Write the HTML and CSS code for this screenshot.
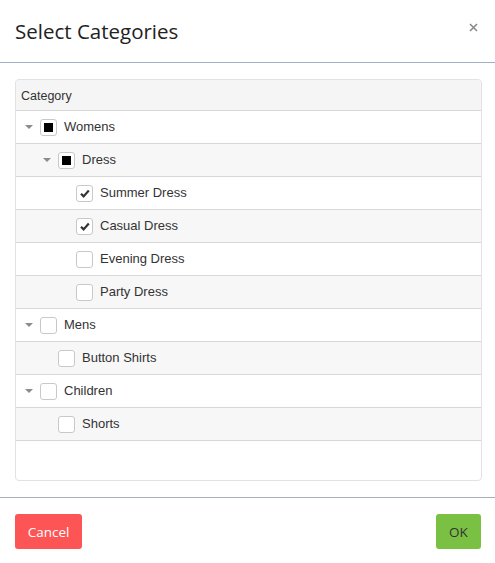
FILE: index.html
```html
<!DOCTYPE html>
<html>
<head>
<meta charset="utf-8">
<link rel="stylesheet" href="styles.css">
</head>
<body>
<div class="modal">
  <div class="modal-header">
    <h4 class="modal-title">Select Categories</h4>
    <button class="close" aria-label="Close">
      <svg width="9" height="9" viewBox="0 0 9 9"><path d="M1 1L8 8M8 1L1 8" stroke="#8a8a8a" stroke-width="1.6" fill="none"/></svg>
    </button>
  </div>
  <div class="modal-body">
    <div class="grid">
      <div class="grid-head">Category</div>
      <div class="row"><span class="toggle"><i class="tri"></i></span><span class="cb"><i class="ind"></i></span><span class="label">Womens</span></div>
      <div class="row alt"><span class="sp"></span><span class="toggle"><i class="tri"></i></span><span class="cb"><i class="ind"></i></span><span class="label">Dress</span></div>
      <div class="row"><span class="sp2"></span><span class="toggle"></span><span class="cb"><svg width="10" height="9" viewBox="0 0 10 9"><path d="M1 4.8L3.6 7.4L8.8 1.6" stroke="#333" stroke-width="2.2" fill="none"/></svg></span><span class="label">Summer Dress</span></div>
      <div class="row alt"><span class="sp2"></span><span class="toggle"></span><span class="cb"><svg width="10" height="9" viewBox="0 0 10 9"><path d="M1 4.8L3.6 7.4L8.8 1.6" stroke="#333" stroke-width="2.2" fill="none"/></svg></span><span class="label">Casual Dress</span></div>
      <div class="row"><span class="sp2"></span><span class="toggle"></span><span class="cb"></span><span class="label">Evening Dress</span></div>
      <div class="row alt"><span class="sp2"></span><span class="toggle"></span><span class="cb"></span><span class="label">Party Dress</span></div>
      <div class="row"><span class="toggle"><i class="tri"></i></span><span class="cb"></span><span class="label">Mens</span></div>
      <div class="row alt"><span class="sp"></span><span class="toggle"></span><span class="cb"></span><span class="label">Button Shirts</span></div>
      <div class="row"><span class="toggle"><i class="tri"></i></span><span class="cb"></span><span class="label">Children</span></div>
      <div class="row alt"><span class="sp"></span><span class="toggle"></span><span class="cb"></span><span class="label">Shorts</span></div>
    </div>
  </div>
  <div class="modal-footer">
    <button class="btn btn-cancel">Cancel</button>
    <button class="btn btn-ok">OK</button>
  </div>
</div>
</body>
</html>
```

FILE: styles.css
```css
* { box-sizing: border-box; }
html, body { margin: 0; padding: 0; background: #fff; }
body { font-family: "Open Sans", "Noto Sans", sans-serif; color: #222; }

.modal { width: 495px; }

.modal-header {
  height: 63px;
  border-bottom: 1px solid #9fb2c4;
  display: flex;
  align-items: center;
  justify-content: space-between;
  padding: 0 15px 0 15px;
}
.modal-title {
  margin: 0;
  font-size: 20.5px;
  font-weight: 400;
  color: #222;
  letter-spacing: 0;
}
.close {
  border: 0;
  background: none;
  padding: 0;
  width: 12px;
  height: 12px;
  display: flex;
  align-items: center;
  justify-content: center;
  margin-right: 1px;
  margin-top: -8px;
}

.modal-body { padding: 16px 13px 16px 15px; }

.grid {
  height: 402px;
  border: 1px solid #e2e2e2;
  border-radius: 4px;
  overflow: hidden;
  font-family: "Liberation Sans", Arial, sans-serif;
  font-size: 13px;
  color: #333;
}
.grid-head {
  height: 31px;
  background: #f5f5f5;
  border-bottom: 1px solid #d8d8d8;
  padding-left: 5px;
  padding-top: 2px;
  display: flex;
  align-items: center;
  font-size: 12.5px;
}
.row {
  height: 33px;
  border-bottom: 1px solid #d8d8d8;
  display: flex;
  align-items: center;
  background: #fff;
}
.row.alt { background: #f7f7f7; }
.sp { width: 18px; flex: none; }
.sp2 { width: 36px; flex: none; }
.toggle {
  width: 24px;
  flex: none;
  display: flex;
  align-items: center;
  padding-left: 9px;
}
.tri {
  display: block;
  width: 0; height: 0;
  border-left: 4px solid transparent;
  border-right: 4px solid transparent;
  border-top: 4px solid #8c8c8c;
}
.cb {
  width: 17px;
  height: 17px;
  flex: none;
  border: 1px solid #c9c9c9;
  border-radius: 3px;
  background: #fff;
  display: flex;
  align-items: center;
  justify-content: center;
}
.ind {
  display: block;
  width: 9px;
  height: 9px;
  background: #000;
}
.label { margin-left: 7px; position: relative; top: -1px; }

.modal-footer {
  border-top: 1px solid #a8afb6;
  display: flex;
  justify-content: space-between;
  padding: 16px 14px 0 15px;
}
.btn {
  height: 35px;
  border: 0;
  border-radius: 3px;
  font-family: "Open Sans", "Noto Sans", sans-serif;
  font-size: 13.5px;
  padding: 0;
}
.btn-cancel { width: 67px; background: #fd5556; color: #fff; }
.btn-ok { width: 45px; background: #7ac143; color: #333; }
```
